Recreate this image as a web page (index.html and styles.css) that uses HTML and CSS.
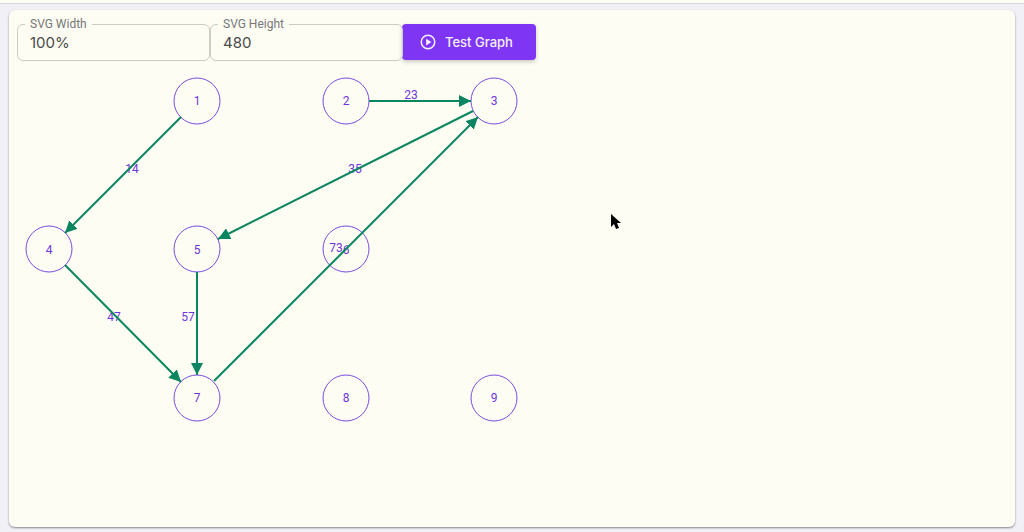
FILE: index.html
```html
<!DOCTYPE html>
<html lang="en">
<head>
<meta charset="utf-8">
<meta name="viewport" content="width=device-width, initial-scale=1">
<title>Test Graph</title>
<link rel="stylesheet" href="styles.css">
</head>
<body>
<div class="topbar"></div>
<main class="card">
  <form class="toolbar">
    <div class="field">
      <label class="field-label" for="svg-width">SVG Width</label>
      <input class="field-input" id="svg-width" type="text" value="100%">
    </div>
    <div class="field">
      <label class="field-label" for="svg-height">SVG Height</label>
      <input class="field-input" id="svg-height" type="text" value="480">
    </div>
    <button class="button" type="button">
      <svg class="button-icon" viewBox="0 0 24 24" aria-hidden="true">
        <circle class="icon-ring" cx="12" cy="12" r="9"/>
        <path d="M9.500 16.500l7-4.500-7-4.500z"/>
      </svg>
      <span>Test Graph</span>
    </button>
  </form>
  <svg class="graph" role="img" aria-label="Directed graph">
    <defs>
      <marker id="arrow" viewBox="0 0 12 12" refX="12" refY="6" markerWidth="12" markerHeight="12" markerUnits="userSpaceOnUse" orient="auto">
        <path class="arrow" d="M0 0 12 6 0 12z"/>
      </marker>
    </defs>
    <g class="node">
      <circle cx="180" cy="40" r="23"/><text x="180" y="44">1</text>
      <circle cx="329" cy="40" r="23"/><text x="329" y="44">2</text>
      <circle cx="477" cy="40" r="23"/><text x="477" y="44">3</text>
      <circle cx="32" cy="188" r="23"/><text x="32" y="193">4</text>
      <circle cx="180" cy="188" r="23"/><text x="180" y="193">5</text>
      <circle cx="329" cy="188" r="23"/><text x="329" y="193">6</text>
      <circle cx="180" cy="337" r="23"/><text x="180" y="341">7</text>
      <circle cx="329" cy="337" r="23"/><text x="329" y="341">8</text>
      <circle cx="477" cy="337" r="23"/><text x="477" y="341">9</text>
    </g>
    <g class="weight">
      <text x="115" y="112">14</text>
      <text x="394" y="38">23</text>
      <text x="338" y="112">35</text>
      <text x="97" y="260">47</text>
      <text x="171" y="260">57</text>
      <text x="319" y="191">73</text>
    </g>
    <g class="edge">
      <path d="M164 56 48 172"/>
      <path d="M352 40H454"/>
      <path d="M456 50 201 178"/>
      <path d="M48 204 164 321"/>
      <path d="M180 211V314"/>
      <path d="M197 320 461 56"/>
    </g>
  </svg>
</main>
<svg class="cursor" viewBox="0 0 12 18" aria-hidden="true">
  <path d="M1 1v13l3-3 2 5 3-1-2-5h4z"/>
</svg>
</body>
</html>
```
FILE: styles.css
```css
* {
  box-sizing: border-box;
}

body {
  display: flex;
  flex-direction: column;
  min-height: 100vh;
  margin: 0;
  background: #f2f0f7;
  color: #4a4a4a;
  font-family: Inter, "Liberation Sans", sans-serif;
}

.topbar {
  height: 4px;
  background: #fdfdf4;
  border-bottom: 1px solid #d8d8d8;
}

.card {
  flex: 1;
  display: flex;
  flex-direction: column;
  margin: 6px 9px 5px;
  padding: 14px 8px 8px;
  background: #fdfdf4;
  border-radius: 6px;
  box-shadow: 0 1px 2px rgba(0, 0, 0, 0.45);
}

.toolbar {
  display: flex;
}

.field {
  position: relative;
  width: 193px;
}

.field + .button {
  margin-left: -1px;
}

.field-label {
  position: absolute;
  top: -8px;
  left: 8px;
  padding: 0 5px;
  background: #fdfdf4;
  color: #777;
  font-family: Roboto, "Liberation Sans", sans-serif;
  font-size: 12px;
  line-height: 16px;
}

.field-input {
  width: 100%;
  height: 37px;
  padding: 0 12px;
  background: transparent;
  border: 1px solid #ccccc6;
  border-radius: 6px;
  color: #4a4a4a;
  font-family: inherit;
  font-size: 15px;
}

.button {
  display: flex;
  align-items: center;
  gap: 8px;
  height: 36px;
  width: 134px;
  padding: 0 17px;
  background: #7e36f4;
  border: 0;
  border-radius: 4px;
  box-shadow: 0 2px 4px rgba(0, 0, 0, 0.2);
  color: #f8f1ff;
  font-family: inherit;
  font-size: 13px;
  font-weight: 500;
  white-space: nowrap;
}

.button-icon {
  flex: none;
  width: 18px;
  height: 18px;
  fill: currentColor;
}

.icon-ring {
  fill: none;
  stroke: currentColor;
  stroke-width: 2px;
}

.graph {
  flex: 1;
  width: 100%;
  min-height: 380px;
}

.node circle {
  fill: none;
  stroke: #7a4be0;
}

.node text,
.weight text {
  fill: #6d35dc;
  font-family: Roboto, "Liberation Sans", sans-serif;
  font-size: 12px;
  text-anchor: middle;
}

.edge path {
  fill: none;
  stroke: #0b8660;
  stroke-width: 2px;
  marker-end: url(#arrow);
}

.arrow {
  fill: #0b8660;
}

.cursor {
  position: absolute;
  top: 213px;
  left: 610px;
  width: 12px;
  height: 18px;
  fill: #000;
  stroke: #fff;
  stroke-width: 1px;
  paint-order: stroke;
}
```
